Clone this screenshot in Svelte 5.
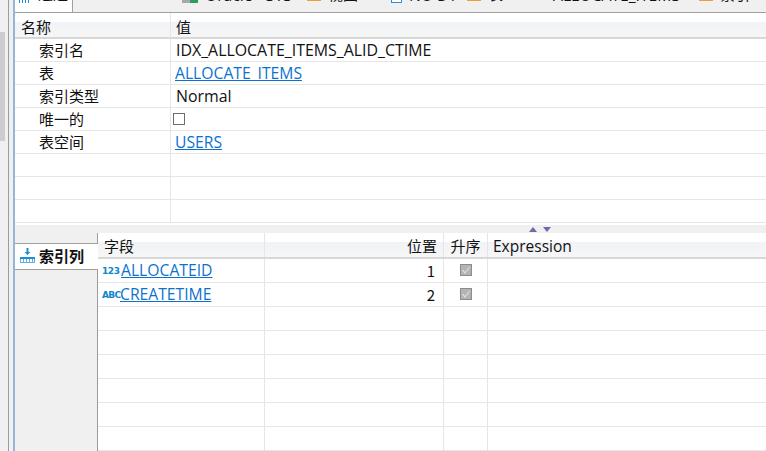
<script>
  const props = [
    { name: '索引名', value: 'IDX_ALLOCATE_ITEMS_ALID_CTIME' },
    { name: '表', link: 'ALLOCATE_ITEMS' },
    { name: '索引类型', value: 'Normal', indent: true },
    { name: '唯一的', check: true },
    { name: '表空间', link: 'USERS' },
    {},
    {},
    {}
  ];
  const columns = [
    { icon: '123', field: 'ALLOCATEID', pos: 1 },
    { icon: 'ABC', field: 'CREATETIME', pos: 2 },
    {}, {}, {}, {}, {}, {}
  ];
  const topTabs = [
    { label: 'Oracle - SYS', kind: 'db', width: 125 },
    { label: '视图', kind: 'bar', width: 84 },
    { label: 'NO DT', kind: 'outline', width: 76 },
    { label: '表', kind: 'bar', width: 86 },
    { label: 'ALLOCATE_ITEMS', kind: 'none', width: 146 },
    { label: '索引', kind: 'bar', width: 67 }
  ];
</script>

<div class="page">
  <div class="rail"><div class="thumb"></div></div>
  <div class="strip"></div>
  <div class="main">
    <div class="tabs">
      <div class="tab">
        <svg width="10" height="3" viewBox="0 0 10 3"><path d="M0.500 0v3M3.500 0v3M6.500 0v3M9.500 0v3" stroke="#1d8fd6" fill="none" /></svg>
        <span>通过</span>
      </div>
      <div class="others">
        {#each topTabs as t}
          <div class="other {t.kind}" style={`width:${t.width}px`}>
            {#if t.kind === 'db'}<i class="gray"></i><i class="green"></i>{/if}
            {#if t.kind === 'bar'}<i class="orange"></i>{/if}
            {#if t.kind === 'outline'}<i class="blue"></i>{/if}
            <span>{t.label}</span>
          </div>
        {/each}
      </div>
    </div>

    <div class="props">
      <div class="row head">
        <div class="c1">名称</div>
        <div class="c2">值</div>
      </div>
      {#each props as p}
        <div class="row">
          <div class="c1 name">{p.name ?? ''}</div>
          <div class="c2" class:indent={p.indent}>
            {#if p.link}
              <a href="#top">{p.link}</a>
            {:else if p.check}
              <span class="box"></span>
            {:else}
              <span class="val">{p.value ?? ''}</span>
            {/if}
          </div>
        </div>
      {/each}
    </div>

    <div class="sash">
      <svg width="22" height="5" viewBox="0 0 22 5">
        <path d="M0 5L4 0L8 5Z" fill="#6c6ca8" />
        <path d="M14 0H22L18 5Z" fill="#6c6ca8" />
      </svg>
    </div>

    <div class="lower">
      <div class="side">
        <div class="side-tab">
          <svg width="15" height="15" viewBox="0 0 15 15">
            <path d="M6.500 0h2v4h2l-3 3-3-3h2z" fill="#1d8fd6" />
            <path d="M0 9h15v2H0z" fill="#1d8fd6" />
            <path d="M0.500 11v4M3.500 11v4M6.500 11v4M9.500 11v4M12.500 11v4M14.500 11v4M0 14.500h15" stroke="#5cb0e6" fill="none" />
          </svg>
          <span>索引列</span>
        </div>
      </div>
      <div class="table">
        <div class="line head">
          <div class="f">字段</div>
          <div class="p">位置</div>
          <div class="s">升序</div>
          <div class="e">Expression</div>
        </div>
        {#each columns as c}
          <div class="line">
            <div class="f">
              {#if c.field}
                <span class="kind" class:abc={c.icon === 'ABC'}>{c.icon}</span><a href="#top">{c.field}</a>
              {/if}
            </div>
            <div class="p">{c.pos ?? ''}</div>
            <div class="s">
              {#if c.field}
                <span class="checked">
                  <svg width="10" height="10" viewBox="0 0 10 10"><path d="M1.500 5l2.500 3 4.500-6" stroke="#dcdcdc" stroke-width="1.200" fill="none" /></svg>
                </span>
              {/if}
            </div>
            <div class="e"></div>
          </div>
        {/each}
      </div>
    </div>
  </div>
</div>

<style>
  :global(body) {
    margin: 0;
    background: #fff;
  }

  .page {
    display: flex;
    width: 766px;
    height: 451px;
    overflow: hidden;
    font-family: "Noto Sans CJK SC", "Open Sans", sans-serif;
    font-size: 15px;
    color: #111;
  }

  .rail {
    width: 8px;
    background: #f0f0f0;
    border-right: 1px solid #9c9c9c;
    flex: none;
    padding-top: 32px;
  }

  .thumb {
    width: 5px;
    height: 109px;
    background: #cdcdcd;
  }

  .strip {
    width: 4px;
    flex: none;
    background: #f0f0f0;
    border-right: 2px solid #97b5d8;
  }

  .main {
    flex: 1;
    min-width: 0;
    display: flex;
    flex-direction: column;
  }

  .tabs {
    display: flex;
    height: 13px;
    flex: none;
    overflow: hidden;
    background: #f0f0f0;
    border-bottom: 1px solid #a0a0a0;
    box-sizing: border-box;
  }

  .tab {
    width: 58px;
    box-sizing: border-box;
    background: #fff;
    border-right: 1px solid #a0a0a0;
    display: flex;
    align-items: flex-start;
    padding-left: 4px;
    gap: 9px;
    flex: none;
  }

  .tab span,
  .other span {
    line-height: 20px;
    margin-top: -16px;
    white-space: nowrap;
  }

  .others {
    display: flex;
    padding-left: 109px;
    flex: none;
  }

  .other {
    display: flex;
    align-items: flex-start;
    gap: 7px;
    flex: none;
  }

  .other.db {
    gap: 0;
  }

  .other.db span {
    margin-left: 7px;
  }

  .other.db span,
  .other.none span,
  .other.outline span {
    font-family: "Open Sans", sans-serif;
    font-size: 15.700px;
    margin-top: -15px;
  }

  .other i {
    display: block;
    flex: none;
  }

  .gray {
    width: 8px;
    height: 3px;
    background: #a8a8a8;
  }

  .green {
    width: 8px;
    height: 3px;
    background: #2e9e5b;
  }

  .orange {
    width: 14px;
    height: 1px;
    background: #f39a3c;
  }

  .blue {
    width: 9px;
    height: 2px;
    border: 1px solid #2a8fd8;
    border-top: 0;
    background: #fff;
  }

  .row {
    display: grid;
    grid-template-columns: 156px 1fr;
    height: 23px;
    box-sizing: border-box;
    border-bottom: 1px solid #e6e6e6;
  }

  .row.head,
  .line.head {
    background: linear-gradient(#fff 0 9px, #f1f3f6 9px, #f6f6f6);
    border-bottom: 2px solid #d8d8d8;
    height: 26px;
  }

  .row.head > div {
    padding-top: 3px;
  }

  .row > div {
    display: flex;
    align-items: center;
    line-height: 22px;
    white-space: nowrap;
    box-sizing: border-box;
  }

  .c1 {
    border-right: 1px solid #e6e6e6;
    padding-left: 6px;
  }

  .c1.name {
    padding-left: 24px;
  }

  .c2 {
    padding-left: 4px;
  }

  .row.head .c2 {
    padding-left: 5px;
  }

  .val {
    font-family: "Open Sans", sans-serif;
    font-size: 15.900px;
    margin-left: 1px;
  }

  a {
    color: #0b72d0;
    text-decoration: underline;
    font-family: "Open Sans", sans-serif;
    font-size: 15.700px;
  }

  .box {
    width: 10px;
    height: 10px;
    border: 1px solid #6d6d6d;
    background: #fff;
    margin-left: -2px;
  }

  .sash {
    height: 8px;
    flex: none;
    margin-top: 2px;
    background: #f0f0f0;
    display: flex;
    align-items: center;
    padding-left: 514px;
  }

  .lower {
    flex: 1;
    display: flex;
    min-height: 0;
  }

  .side {
    width: 82px;
    flex: none;
    background: #f0f0f0;
    padding-top: 10px;
  }

  .side-tab {
    position: relative;
    height: 27px;
    width: 83px;
    background: #fff;
    border-top: 1px solid #a0a0a0;
    border-bottom: 1px solid #a0a0a0;
    box-sizing: border-box;
    display: flex;
    align-items: center;
    padding-left: 5px;
    padding-bottom: 3px;
    gap: 4px;
    font-weight: 700;
  }

  .table {
    flex: 1;
    min-width: 0;
    border-left: 1px solid #9c9c9c;
  }

  .line {
    display: grid;
    grid-template-columns: 167px 179px 44px 1fr;
    height: 24px;
    box-sizing: border-box;
    border-bottom: 1px solid #e6e6e6;
  }

  .line > div {
    border-right: 1px solid #e6e6e6;
    display: flex;
    align-items: center;
    white-space: nowrap;
    min-width: 0;
    padding-bottom: 2px;
    box-sizing: border-box;
  }

  .line.head > div {
    padding-bottom: 0;
  }

  .line .f {
    padding-left: 4px;
  }

  .line.head .f {
    padding-left: 6px;
  }

  .line .p {
    justify-content: flex-end;
    padding-right: 8px;
  }

  .line.head .p {
    padding-right: 6px;
  }

  .line .s {
    justify-content: center;
  }

  .line .e {
    border-right: 0;
    padding-left: 5px;
    font-family: "Open Sans", sans-serif;
    font-size: 15.500px;
  }

  .line.head .e {
    padding-top: 1px;
  }

  .kind {
    font-family: "DejaVu Sans", sans-serif;
    font-size: 9px;
    line-height: 1;
    font-weight: 700;
    color: #0f86c9;
    width: 19px;
    flex: none;
    margin-top: 3px;
    letter-spacing: -0.400px;
  }

  .kind.abc {
    width: 18px;
    letter-spacing: -0.700px;
  }

  .checked {
    width: 10px;
    height: 10px;
    border: 1px solid #8c8c8c;
    background: #b4b4b4;
    display: block;
    line-height: 0;
  }
</style>
